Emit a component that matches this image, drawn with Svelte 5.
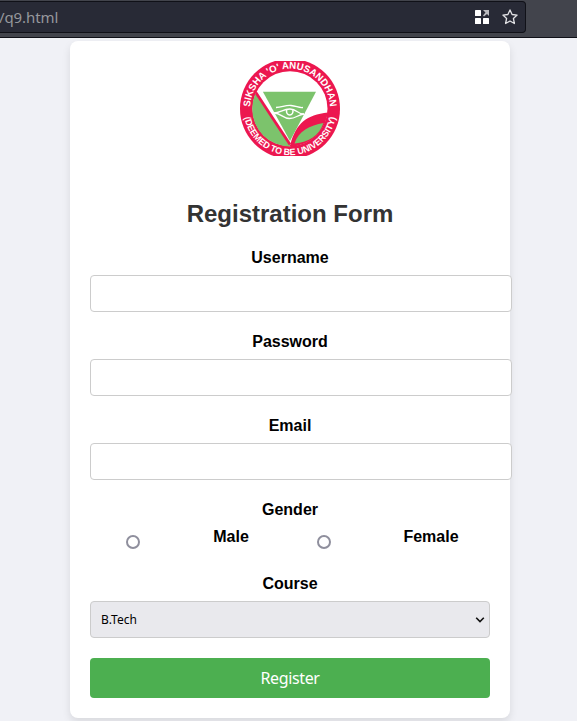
<script>
  const fields = [
    { id: 'username', label: 'Username', type: 'text' },
    { id: 'password', label: 'Password', type: 'password' },
    { id: 'email', label: 'Email', type: 'email' }
  ];
  const genders = ['Male', 'Female'];
</script>

<div class="page">
  <header class="toolbar">
    <div class="address">
      <span class="url">/q9.html</span>
      <svg class="grid" width="14" height="14" viewBox="0 0 14 14">
        <g fill="#fff">
          <rect width="6" height="6" rx=".6" />
          <rect y="8" width="6" height="6" rx=".6" />
          <rect x="8" y="8" width="6" height="6" rx=".6" />
        </g>
        <path d="M8 0h6v6l-2-2-3 2.5L8 5.5 10.5 2.5Z" fill="#bcbcc0" />
      </svg>
      <svg class="star" width="16" height="16" viewBox="0 0 16 16">
        <path d="M8 .9l2.1 4.6 5 .6-3.7 3.4 1 5L8 12l-4.4 2.5 1-5L.9 6.1l5-.6Z" fill="none" stroke="#e2e2e5" stroke-width="1.3" stroke-linejoin="round" />
      </svg>
    </div>
  </header>

  <main class="card">
    <svg class="logo" width="100" height="95" viewBox="0 0 100 95">
      <defs>
        <path id="arc-top" d="M10 47.7A40 40 0 0 1 90 47.7" />
        <path id="arc-bottom" d="M3.5 47.7A46.5 46.5 0 0 0 96.5 47.7" />
        <clipPath id="inner"><circle cx="50" cy="47.7" r="37.8" /></clipPath>
      </defs>
      <circle cx="50" cy="47.7" r="50" fill="#ec174f" />
      <circle cx="50" cy="47.7" r="37.5" fill="#fff" />
      <g clip-path="url(#inner)">
        <path d="M15 32L50 83V86L40 95H0V32Z" fill="#7cc36c" />
        <path d="M15.5 31L50 83.5" stroke="#ec174f" stroke-width="2.8" />
        <path d="M50.5 83C57 60 68 53 94 51V95H46Z" fill="#ec174f" />
        <path d="M54.5 82.5C58 70 70 64.5 83.5 62C79 75 69 81 54.5 82.5Z" fill="#7cc36c" />
      </g>
      <path d="M22.9 30.7H76L50 80Z" fill="#7cc36c" />
      <g fill="none" stroke="#fff" stroke-width="1.3">
        <path d="M36 46.5C42 46.5 45 44 51 44.5S58 47 63 46.5" />
        <path d="M34 52C40 52 43 48 50 48S58 53.5 64 53" />
        <path d="M34 52C41 52 43 57.5 49.5 57.5S58 53.5 64 53" />
        <path d="M46.7 49C45 55.5 54.5 55.5 52.8 49" stroke-width="1.5" />
      </g>
      <g class="seal">
        <text text-anchor="middle"><textPath href="#arc-top" startOffset="50%" textLength="122" lengthAdjust="spacingAndGlyphs">SIKSHA 'O' ANUSANDHAN</textPath></text>
        <text class="lower" text-anchor="middle"><textPath href="#arc-bottom" startOffset="50%" textLength="128" lengthAdjust="spacingAndGlyphs">(DEEMED TO BE UNIVERSITY)</textPath></text>
      </g>
    </svg>

    <h2>Registration Form</h2>

    <form>
      {#each fields as field}
        <label for={field.id}>{field.label}</label>
        <input class="text" id={field.id} type={field.type} />
      {/each}

      <div class="label">Gender</div>
      <div class="genders">
        {#each genders as gender}
          <input class="radio" id={gender} type="radio" name="gender" />
          <label for={gender}>{gender}</label>
        {/each}
      </div>

      <label for="course">Course</label>
      <div class="select-wrap">
        <select id="course"><option>B.Tech</option></select>
        <svg width="10" height="6" viewBox="0 0 10 6"><path d="M1.2 .8L5 4.6 8.8 .8" fill="none" stroke="#111" stroke-width="1.6" /></svg>
      </div>

      <button type="button">Register</button>
    </form>
  </main>
</div>

<style>
  .page {
    height: 721px;
    overflow: hidden;
    background: #f0f1f6;
    font-family: "Liberation Sans", Arial, sans-serif;
  }
  .toolbar {
    box-sizing: border-box;
    height: 38px;
    padding-top: 1px;
    background: #42444c;
    border-bottom: 1px solid #101118;
  }
  .address {
    box-sizing: border-box;
    display: flex;
    align-items: center;
    width: 526px;
    height: 32px;
    padding-right: 7px;
    background: #282a36;
    border: 1px solid #101118;
    border-left: 0;
    border-radius: 0 4px 4px 0;
  }
  .url {
    flex: 1;
    text-indent: -1px;
    font: 15px/20px "Noto Sans", sans-serif;
    letter-spacing: -0.1px;
    color: #96979c;
  }
  .star { margin-left: 13px; }
  .card {
    box-sizing: border-box;
    width: 440px;
    height: 677px;
    margin: 3px 0 0 70px;
    padding: 20px;
    background: #fff;
    border-radius: 8px;
    box-shadow: 0 4px 8px rgba(0, 0, 0, 0.1);
    text-align: center;
  }
  .logo { display: block; margin: 0 auto; }
  .seal {
    font: bold 9.8px "Liberation Sans", Arial, sans-serif;
    fill: #fff;
  }
  .lower { font-size: 9.2px; }
  h2 {
    margin: 44px 0 21px;
    font-size: 24px;
    line-height: 27px;
    color: #333;
  }
  label, .label {
    display: block;
    margin-bottom: 8px;
    font-size: 16px;
    font-weight: bold;
    line-height: 19px;
    color: #000;
  }
  .text {
    display: block;
    box-sizing: border-box;
    width: 422px;
    height: 37px;
    margin: 0 0 20px;
    background: #fff;
    border: 1px solid #ccc;
    border-radius: 4px;
  }
  .genders {
    display: flex;
    height: 47px;
  }
  .genders label { width: 122px; }
  .radio {
    appearance: none;
    box-sizing: border-box;
    width: 14px;
    height: 14px;
    margin: 8px 30px 0 36px;
    border: 2px solid #8f8f9d;
    border-radius: 50%;
    background: #fff;
  }
  .genders label + .radio { margin: 8px 44px 0 25px; }
  .genders label:last-child { width: 112px; }
  .radio, .genders label { flex: none; }
  .select-wrap {
    display: flex;
    align-items: center;
    box-sizing: border-box;
    height: 37px;
    margin-bottom: 20px;
    padding: 0 4px 0 10px;
    background: #e9e9ed;
    border: 1px solid #ccc;
    border-radius: 4px;
  }
  select {
    flex: 1;
    appearance: none;
    padding: 0;
    border: 0;
    background: transparent;
    font: 12px/20px "Noto Sans", sans-serif;
    color: #000;
  }
  button {
    display: block;
    width: 100%;
    height: 40px;
    padding: 1px 0 0;
    border: 0;
    border-radius: 4px;
    background: #4caf50;
    font: 16px/39px "Noto Sans", sans-serif;
    letter-spacing: -0.35px;
    color: #fff;
  }
</style>
